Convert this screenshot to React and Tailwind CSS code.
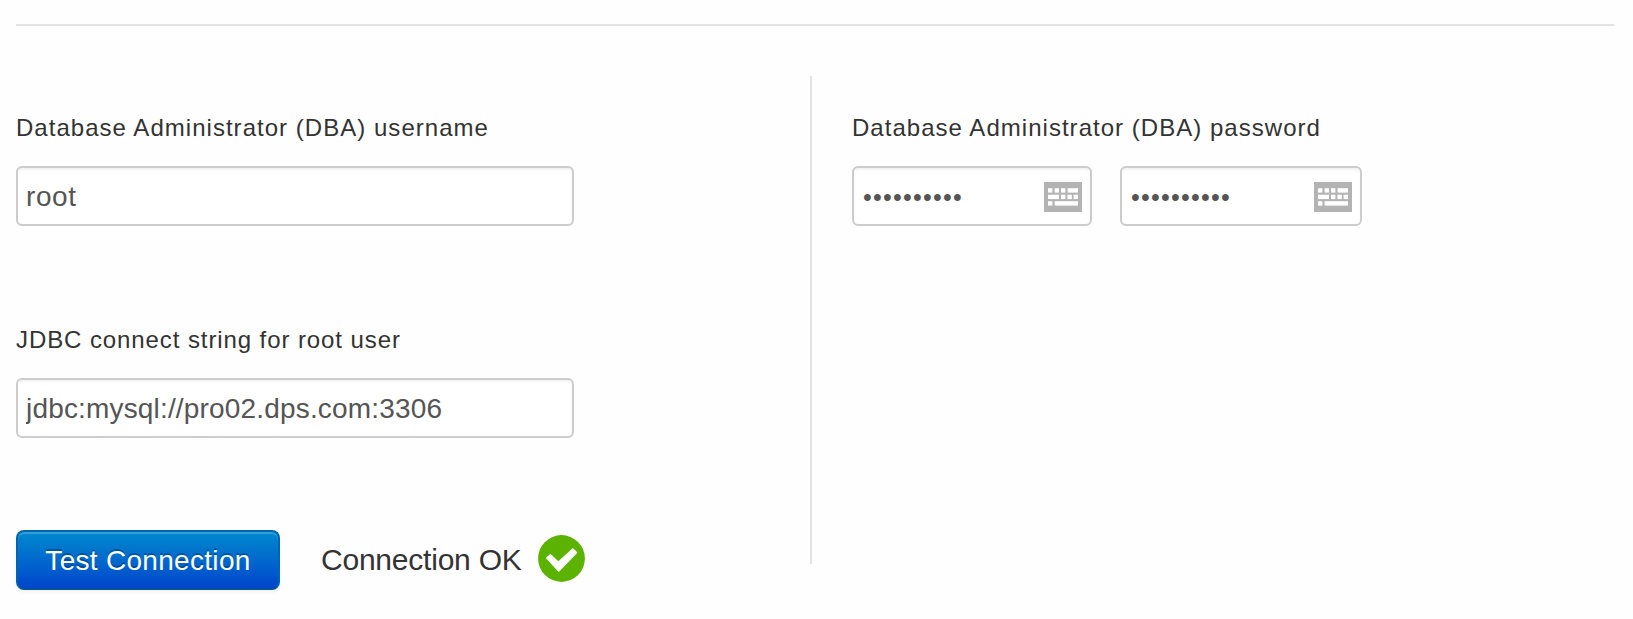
const labelClass = "block text-[24px] leading-[32px] text-[#333333] whitespace-nowrap";
const inputClass =
  "block h-[60px] rounded-[6px] border-2 border-[#cccccc] bg-white pt-[2px] text-[#555555] outline-none shadow-[inset_0_2px_2px_rgba(0,0,0,0.05)]";

function KeyboardIcon() {
  const keys = [
    [4, 6.2, 4.4], [10.6, 6.2, 4.4], [17, 6.2, 4.4], [23.6, 6.2, 10.4],
    [4, 12.7, 11], [17, 12.7, 4.4], [23.4, 12.7, 4.4], [29.6, 12.7, 4.4],
    [4, 19.2, 4.4], [10.6, 19.2, 23.4],
  ];
  return (
    <svg width="38" height="30" viewBox="0 0 38 30" className="absolute top-[16px] right-[10px]">
      <rect width="38" height="30" fill="#b3b3b3" />
      {keys.map(([x, y, w], i) => (
        <rect key={i} x={x} y={y} width={w} height="4.4" fill="#ffffff" />
      ))}
    </svg>
  );
}

function PasswordField({ className, label }) {
  return (
    <div className={`relative ${className}`}>
      <input type="password" aria-label={label} defaultValue="abcdefghij" className={`${inputClass} w-full pl-[9px] text-[25px] tracking-[1.25px]`} />
      <KeyboardIcon />
    </div>
  );
}

export default function App() {
  return (
    <div className="h-[619px] w-[1633px] overflow-hidden bg-[#fefefe] pt-[24px] pl-[16px] font-['Liberation_Sans',Arial,sans-serif]">
      <div className="h-[2px] w-[1598px] bg-[#e3e3e3]" />
      <div className="mt-[50px] flex">
        <div className="w-[794px] pt-[36px]">
          <label className={`${labelClass} tracking-[1.03px]`}>Database Administrator (DBA) username</label>
          <input defaultValue="root" className={`${inputClass} mt-[22px] w-[558px] pl-[8px] text-[28px] tracking-[0.6px]`} />
          <label className={`${labelClass} mt-[98px] tracking-[0.91px]`}>JDBC connect string for root user</label>
          <input defaultValue="jdbc:mysql://pro02.dps.com:3306" className={`${inputClass} mt-[22px] w-[558px] pl-[8px] text-[28px] tracking-[0.17px]`} />
          <div className="mt-[92px] flex items-center">
            <button className="h-[60px] w-[264px] rounded-[8px] border-2 border-[#0064b0] border-b-[#00549c] bg-linear-to-b from-[#0088cc] to-[#0044cc] pt-[2px] text-[28px] tracking-[0.3px] text-white [text-shadow:0_-2px_0_rgba(0,0,0,0.25)] shadow-[inset_0_2px_0_rgba(255,255,255,0.2),0_2px_4px_rgba(0,0,0,0.05)]">
              Test Connection
            </button>
            <span className="-mt-[2px] ml-[41px] w-[217px] whitespace-nowrap text-[30px] tracking-[-0.22px] text-[#333333]">Connection OK</span>
            <svg width="47" height="47" viewBox="0 0 47 47" className="-mt-[3px]">
              <circle cx="23.5" cy="23.5" r="23.4" fill="#5bb300" />
              <path d="M8.8 23 L12.4 19.8 L20.3 27.3 L34.9 14.1 L38.4 17.6 L20.7 36 Z" fill="#ffffff" stroke="#ffffff" strokeWidth="1.6" strokeLinejoin="round" />
            </svg>
          </div>
        </div>
        <div className="h-[488px] w-[2px] bg-[#e3e3e3]" />
        <div className="pt-[36px] pl-[40px]">
          <label className={`${labelClass} tracking-[1.03px]`}>Database Administrator (DBA) password</label>
          <div className="mt-[22px] flex gap-[28px]">
            <PasswordField className="w-[240px]" label="Password" />
            <PasswordField className="w-[242px]" label="Confirm password" />
          </div>
        </div>
      </div>
    </div>
  );
}
